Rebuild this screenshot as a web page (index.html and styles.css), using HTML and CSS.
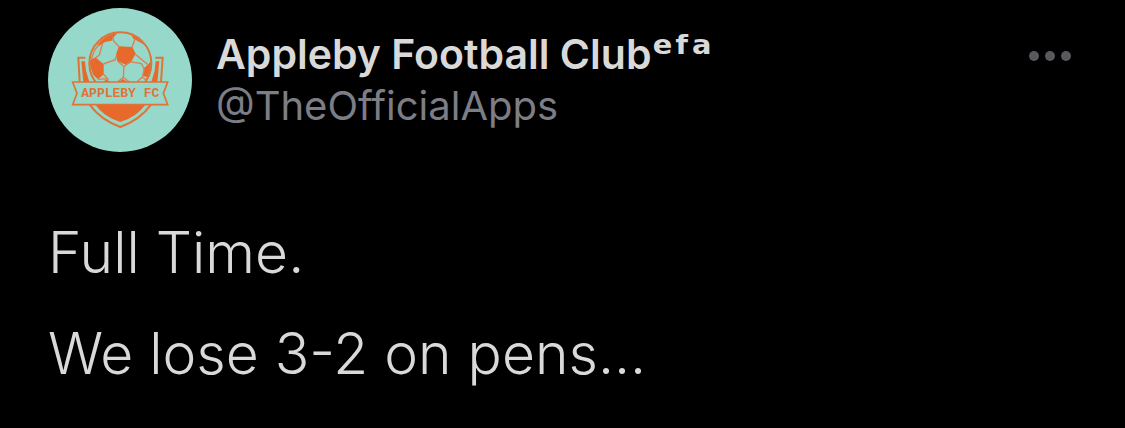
FILE: index.html
```
<!DOCTYPE html>
<html lang="en">
<head>
    <meta charset="UTF-8">
    <meta name="viewport" content="width=device-width, initial-scale=1.0">
    <title>Appleby Football Club</title>
    <link rel="stylesheet" href="styles.css">
</head>

<body>

    <article class="tweet">
        <header class="tweet-header">
            <svg class="avatar" viewBox="24 24 432 432" role="img" aria-label="Appleby FC">
                <circle class="mint" cx="240" cy="240" r="216" />

                <!-- shield -->
                <path class="line" d="M136 173H115L119 246M346 173H368L363 246" />
                <path class="orange" d="M124 184H135L138 212L148 246H130ZM358 184H347L344 212L334 246H352Z" />
                <path class="line" d="M149 314Q181 359 241 381Q301 359 333 314" />
                <path class="orange" d="M166 314H316Q291 350 241 366Q191 350 166 314Z" />

                <!-- ball -->
                <clipPath id="ball">
                    <circle cx="241" cy="190" r="91" />
                </clipPath>
                <circle class="mint" cx="241" cy="190" r="95" />
                <g clip-path="url(#ball)">
                    <path class="orange" d="M237 139L277 141L287 161L272 188L257 194L232 183L228 162Z" />
                    <path class="orange" d="M145 183L166 172L191 193L191 223L174 238L160 225Z" />
                    <path class="orange" d="M172 134Q194 106 236 95L219 114L215 122L195 126L177 138Z" />
                    <path class="orange" d="M270 98Q304 108 315 136L289 121L280 116Z" />
                    <path class="orange" d="M334 180L338 205L325 232L309 228L311 205L324 194Z" />
                    <path class="orange" d="M197 237L211 246H192ZM249 237L263 247H234Z" />
                    <path class="seam" d="M219 108L220 122L238 141M285 117L276 142M188 129L178 165M231 161L226 179L190 192M232 182L252 200L250 232L232 246M270 185L252 200M270 185L304 191L313 207L307 231L318 240M284 161L324 194M190 222L206 240M250 232L268 246M174 238L199 236M307 231L290 246M178 165L166 174M154 178L164 150L178 132" />
                </g>
                <circle class="line" cx="241" cy="190" r="93" />

                <!-- ribbon -->
                <path class="ribbon" d="M98 246H383L370 280L383 314H98L111 280Z" />
                <text class="crest-name" x="241" y="292" text-anchor="middle">APPLEBY FC</text>
            </svg>
            <div class="author">
                <h1 class="name">Appleby Football Club<span class="suffix">ᵉᶠᵃ</span></h1>
                <a class="handle" href="#">@TheOfficialApps</a>
            </div>
            <button class="more" type="button" aria-label="More">
                <svg viewBox="0 0 42 10">
                    <circle cx="5" cy="5" r="5" />
                    <circle cx="21" cy="5" r="5" />
                    <circle cx="37" cy="5" r="5" />
                </svg>
            </button>
        </header>
        <div class="tweet-text">
            <p>Full Time.</p>
            <p>We lose 3-2 on pens...</p>
        </div>
    </article>

</body>

</html>
```

FILE: styles.css
```
* {
    box-sizing: border-box;
}

body {
    margin: 0;
    background-color: #000;
    color: #d9d9d9;
    font-family: Inter, "Liberation Sans", sans-serif;
}

.tweet {
    padding: 8px 54px 16px 48px;
}

.tweet-header {
    display: flex;
    align-items: flex-start;
}

.avatar {
    flex: none;
    width: 144px;
    height: 144px;
}

.author {
    flex: 1;
    min-width: 0;
    margin-left: 24px;
    padding-top: 20px;
}

.name {
    margin: 0;
    font-size: 41px;
    line-height: 52px;
    font-weight: 600;
}

.suffix {
    font-family: "DejaVu Sans", sans-serif;
    font-size: 46px;
    line-height: 0;
}

.handle {
    display: block;
    color: #7c7d85;
    font-size: 40px;
    line-height: 52px;
    text-decoration: none;
}

.more {
    margin-top: 43px;
    padding: 0;
    border: none;
    background: none;
    cursor: pointer;
}

.more svg {
    display: block;
    width: 42px;
    height: 10px;
    fill: #58595c;
}

.tweet-text {
    margin-top: 50px;
    font-size: 57px;
    line-height: 101px;
    font-weight: 300;
}

.tweet-text p {
    margin: 0;
}

/* club crest */
.mint {
    fill: #96d9ca;
}

.orange {
    fill: #e8692c;
}

.line {
    fill: none;
    stroke: #e07338;
    stroke-width: 6px;
}

.seam {
    fill: none;
    stroke: #dc8050;
    stroke-width: 4px;
}

.ribbon {
    fill: #96d9ca;
    stroke: #e07338;
    stroke-width: 5px;
}

.crest-name {
    fill: #e07338;
    font-family: "Liberation Mono", monospace;
    font-size: 39px;
    font-weight: 700;
}
```
